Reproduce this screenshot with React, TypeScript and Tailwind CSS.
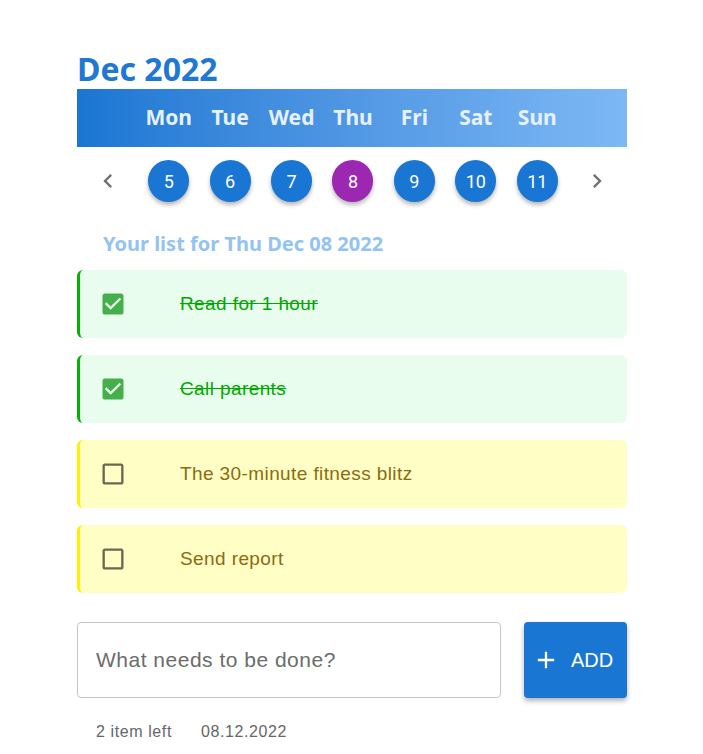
import React from "react";

const days = [
  { name: "Mon", date: 5 },
  { name: "Tue", date: 6 },
  { name: "Wed", date: 7 },
  { name: "Thu", date: 8 },
  { name: "Fri", date: 9 },
  { name: "Sat", date: 10 },
  { name: "Sun", date: 11 },
];

const todos = [
  { id: 1, text: "Read for 1 hour", done: true },
  { id: 2, text: "Call parents", done: true },
  { id: 3, text: "The 30-minute fitness blitz", done: false },
  { id: 4, text: "Send report", done: false },
];

function Chevron({ dir }: { dir: "left" | "right" }) {
  return (
    <svg viewBox="0 0 24 24" className="h-[28px] w-[28px] fill-[#6f6f6f]">
      {dir === "left" ? (
        <path d="M15.41 7.41 14 6l-6 6 6 6 1.41-1.41L10.83 12z" />
      ) : (
        <path d="M10 6 8.59 7.41 13.17 12l-4.58 4.59L10 18l6-6z" />
      )}
    </svg>
  );
}

function CheckIcon({ checked }: { checked: boolean }) {
  if (checked) {
    return (
      <svg viewBox="0 0 24 24" className="h-[28px] w-[28px] fill-[#45b04b]">
        <path d="M19 3H5c-1.11 0-2 .9-2 2v14c0 1.1.89 2 2 2h14c1.11 0 2-.9 2-2V5c0-1.1-.89-2-2-2zm-9 14l-5-5 1.41-1.41L10 14.17l7.59-7.59L19 8l-9 9z" />
      </svg>
    );
  }
  return (
    <svg viewBox="0 0 24 24" className="h-[28px] w-[28px] fill-[#6e6650]">
      <path d="M19 5v14H5V5h14m0-2H5c-1.1 0-2 .9-2 2v14c0 1.1.9 2 2 2h14c1.1 0 2-.9 2-2V5c0-1.1-.9-2-2-2z" />
    </svg>
  );
}

export default function App() {
  return (
    <div className="min-h-screen bg-white font-['Liberation_Sans',Arial,sans-serif]">
      <div className="ml-[77px] flex w-[550px] flex-col pt-[48px]">
        <h1 className="font-['Noto_Sans',sans-serif] text-[32px] font-bold leading-[41px] text-[#1f78d1]">
          Dec 2022
        </h1>

        <div className="grid h-[58px] grid-cols-[61px_repeat(7,minmax(0,1fr))_59px] items-center bg-linear-to-r from-[#1976d2] to-[#7db8f5]">
          <span />
          {days.map(function renderDay(day) {
            return (
              <span
                key={day.name}
                className="text-center font-['Noto_Sans',sans-serif] text-[21px] font-bold text-[#e6f1fd]"
              >
                {day.name}
              </span>
            );
          })}
          <span />
        </div>

        <div className="grid h-[68px] grid-cols-[61px_repeat(7,minmax(0,1fr))_59px] items-center">
          <button className="flex justify-center">
            <Chevron dir="left" />
          </button>
          {days.map(function renderDate(day) {
            return (
              <div key={day.date} className="flex justify-center">
                <span
                  className={
                    day.date === 8
                      ? "flex h-[42px] w-[41px] items-center justify-center rounded-full bg-[#9c27b0] font-['Roboto',sans-serif] text-[18px] text-white shadow-[0_3px_4px_rgba(0,0,0,0.28)]"
                      : "flex h-[42px] w-[41px] items-center justify-center rounded-full bg-[#1976d2] font-['Roboto',sans-serif] text-[18px] text-white shadow-[0_3px_4px_rgba(0,0,0,0.28)]"
                  }
                >
                  {day.date}
                </span>
              </div>
            );
          })}
          <button className="flex justify-center">
            <Chevron dir="right" />
          </button>
        </div>

        <h2 className="pl-[26px] pt-[15px] pb-[13px] font-['Noto_Sans',sans-serif] text-[20px] font-bold leading-[27px] text-[#93c3f3]">
          Your list for Thu Dec 08 2022
        </h2>

        <ul className="flex flex-col gap-[17px]">
          {todos.map(function renderTodo(todo) {
            return (
              <li
                key={todo.id}
                className={
                  todo.done
                    ? "flex h-[68px] items-center rounded-md border-l-[3px] border-[#00b400] bg-[#e9fdee]"
                    : "flex h-[68px] items-center rounded-md border-l-[3px] border-[#ffef00] bg-[#ffffc5]"
                }
              >
                <span className="ml-[19px] flex w-[81px] items-center">
                  <CheckIcon checked={todo.done} />
                </span>
                <span
                  className={
                    todo.done
                      ? "text-[19px] tracking-[0.4px] text-[#00a800] line-through"
                      : "text-[19px] tracking-[0.4px] text-[#8c6a12]"
                  }
                >
                  {todo.text}
                </span>
              </li>
            );
          })}
        </ul>

        <div className="mt-[29px] flex gap-[23px]">
          <input
            className="h-[76px] flex-1 rounded-[4px] border border-[#c4c4c4] px-[18px] text-[21px] tracking-[0.5px] text-[#333] outline-none placeholder:text-[#6b6b6b]"
            placeholder="What needs to be done?"
          />
          <button className="flex h-[76px] w-[103px] items-center gap-[11px] rounded-[4px] bg-[#1976d2] pl-[8px] text-[20px] text-white shadow-[0_3px_5px_rgba(0,0,0,0.3)]">
            <svg viewBox="0 0 24 24" className="h-[28px] w-[28px] fill-white">
              <path d="M19 13h-6v6h-2v-6H5v-2h6V5h2v6h6v2z" />
            </svg>
            ADD
          </button>
        </div>

        <div className="flex gap-[29px] pl-[19px] pt-[22px] text-[16px] tracking-[0.6px] text-[#666]">
          <span>2 item left</span>
          <span>08.12.2022</span>
        </div>
      </div>
    </div>
  );
}
